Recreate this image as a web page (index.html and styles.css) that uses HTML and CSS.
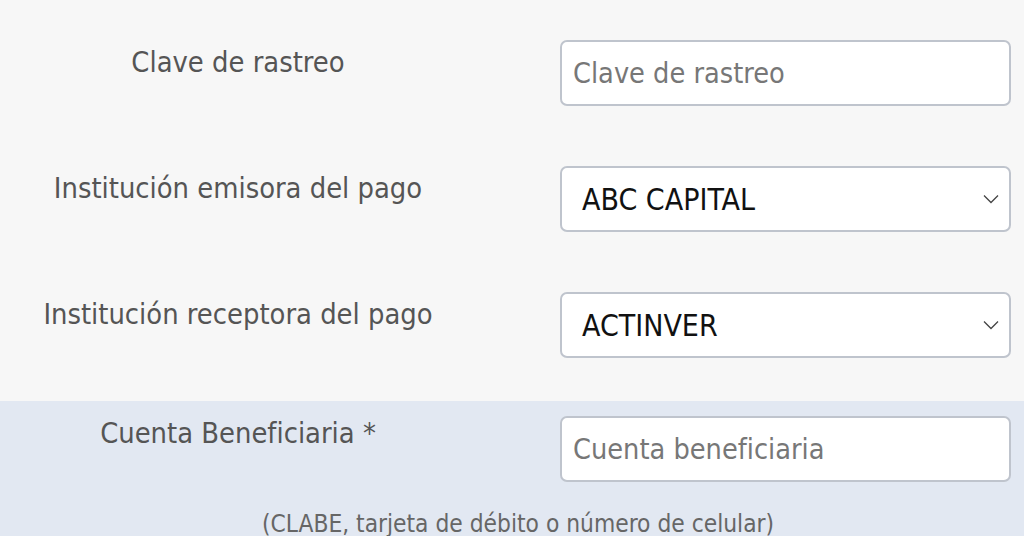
FILE: index.html
```html
<!DOCTYPE html>
<html lang="es">
<head>
<meta charset="utf-8">
<link rel="stylesheet" href="styles.css">
</head>
<body>
<div class="page">
  <section class="group group-plain">
    <div class="row">
      <label class="label" for="clave">Clave de rastreo</label>
      <input class="field" id="clave" type="text" placeholder="Clave de rastreo">
    </div>
    <div class="row">
      <label class="label" for="emisora">Institución emisora del pago</label>
      <div class="select" id="emisora">
        <span class="select-value">ABC CAPITAL</span>
        <svg class="chev" width="16" height="10" viewBox="0 0 16 10"><path d="M1 1.5 L8 8.5 L15 1.5" fill="none" stroke="#444" stroke-width="1.3"/></svg>
      </div>
    </div>
    <div class="row">
      <label class="label" for="receptora">Institución receptora del pago</label>
      <div class="select" id="receptora">
        <span class="select-value">ACTINVER</span>
        <svg class="chev" width="16" height="10" viewBox="0 0 16 10"><path d="M1 1.5 L8 8.5 L15 1.5" fill="none" stroke="#444" stroke-width="1.3"/></svg>
      </div>
    </div>
  </section>
  <section class="group group-blue">
    <div class="row">
      <label class="label label-raised" for="cuenta">Cuenta Beneficiaria *</label>
      <input class="field" id="cuenta" type="text" placeholder="Cuenta beneficiaria">
    </div>
    <p class="hint">(CLABE, tarjeta de débito o número de celular)</p>
  </section>
</div>
</body>
</html>
```
FILE: styles.css
```css
html, body {
  margin: 0;
  padding: 0;
}
body {
  background: #f7f7f7;
  font-family: "DejaVu Sans Condensed", "DejaVu Sans", sans-serif;
  width: 1024px;
  height: 536px;
  overflow: hidden;
}
.group {
  padding-right: 13px;
}
.group-plain {
  padding-top: 40px;
  padding-bottom: 43px;
  display: flex;
  flex-direction: column;
  gap: 60px;
}
.group-blue {
  background: #e2e8f2;
  padding-top: 15px;
  height: 120px;
}
.row {
  display: grid;
  grid-template-columns: 476px 1fr;
  column-gap: 84px;
  align-items: start;
}
.label {
  text-align: center;
  color: #555;
  font-size: 28.8px;
  line-height: 44px;
}
.label-raised {
  margin-top: -5px;
}
.field, .select {
  box-sizing: border-box;
  height: 66px;
  width: 100%;
  border: 2px solid #bfc4cd;
  border-radius: 7px;
  background: #fff;
  font-family: inherit;
}
.field {
  padding: 0 11px;
  font-size: 28.6px;
  color: #222;
  outline: none;
}
.field::placeholder {
  color: #777;
}
.select {
  display: flex;
  align-items: center;
  justify-content: space-between;
  padding: 0 10px 0 20px;
}
.select-value {
  font-size: 30px;
  color: #111;
}
.chev {
  display: block;
}
.hint {
  margin: 27px 0 0;
  text-align: center;
  color: #666;
  font-size: 24.3px;
  padding-left: 25px;
}
```
